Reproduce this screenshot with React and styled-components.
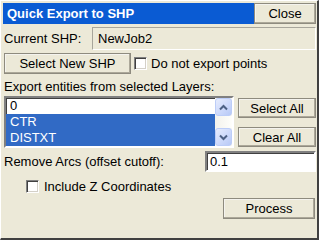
import React, { useState } from 'react';
import styled, { createGlobalStyle } from 'styled-components';

const GlobalStyle = createGlobalStyle`
  html, body {
    margin: 0;
    padding: 0;
    background: #ece9d8;
  }
  body {
    font-family: "Liberation Sans", Arial, sans-serif;
    font-size: 13px;
    color: #000;
  }
`;

const Window = styled.div`
  width: 319px;
  height: 240px;
  box-sizing: border-box;
  background: #ece9d8;
  border-style: solid;
  border-width: 1px 2px 2px 1px;
  border-color: #fff #404040 #404040 #fff;
  padding: 2px 1px 0 3px;
  display: flex;
  flex-direction: column;
  overflow: hidden;
`;

const TitleRow = styled.div`
  display: flex;
  height: 21px;
  margin-left: -1px;
`;

const TitleBar = styled.div`
  flex: 1;
  background: #0a5bd3;
  color: #fff;
  font-weight: bold;
  font-size: 13px;
  line-height: 21px;
  padding-left: 4px;
`;

const Button = styled.button`
  box-sizing: border-box;
  width: ${(p) => p.$w}px;
  height: ${(p) => p.$h || 21}px;
  margin: 0 ${(p) => p.$mr || 0}px 0 0;
  padding: 0;
  font-family: inherit;
  font-size: 13px;
  color: #000;
  background: #ece9d8;
  border: 1px solid;
  border-color: #fff #404040 #404040 #fff;
  box-shadow: inset -1px -1px 0 #aca899, inset 1px 1px 0 #f4f3ee;
  outline: 1px solid #8e8b7f;
  outline-offset: -1px;
  flex-shrink: 0;
`;

const Row = styled.div`
  display: flex;
  align-items: center;
  margin-top: ${(p) => p.$mt}px;
  height: ${(p) => p.$h}px;
  justify-content: ${(p) => p.$justify || 'flex-start'};
`;

const Label = styled.span`
  width: ${(p) => (p.$w ? `${p.$w}px` : 'auto')};
  flex-shrink: 0;
  white-space: nowrap;
`;

const ReadField = styled.div`
  flex: 1;
  height: 100%;
  box-sizing: border-box;
  border: 1px solid;
  border-color: #a7a59b #fff #fff #a7a59b;
  padding-left: 5px;
  line-height: 21px;
`;

const CheckLabel = styled.label`
  display: flex;
  align-items: center;
  gap: ${(p) => p.$gap}px;
  margin-left: ${(p) => p.$ml}px;
  white-space: nowrap;
`;

const Box = styled.span`
  width: 13px;
  height: 13px;
  box-sizing: border-box;
  background: #fff;
  border: 1px solid;
  border-color: #808080 #fff #fff #808080;
  box-shadow: inset 1px 1px 0 #404040, inset -1px -1px 0 #d4d0c8;
  flex-shrink: 0;
`;

const ListRow = styled.div`
  display: flex;
  margin-top: 2px;
  height: 52px;
  gap: 4px;
`;

const ListBox = styled.div`
  width: 231px;
  box-sizing: border-box;
  border: 2px solid;
  border-color: #808080 #fff #fff #808080;
  box-shadow: inset 1px 1px 0 #404040;
  background: #fff;
  display: flex;
`;

const Items = styled.div`
  flex: 1;
  display: flex;
  flex-direction: column;
`;

const Item = styled.div`
  height: 16px;
  line-height: 16px;
  padding-left: 4px;
  background: ${(p) => (p.$sel ? '#316ac5' : 'transparent')};
  color: ${(p) => (p.$sel ? '#fff' : '#000')};
`;

const ScrollBar = styled.div`
  width: 17px;
  display: flex;
  flex-direction: column;
  background: #f7f6f1;
`;

const Track = styled.div`
  flex: 1;
  background: linear-gradient(90deg, #f3f2ec, #fefefb);
`;

const ScrollBtn = styled.div`
  height: 18px;
  box-sizing: border-box;
  border: 1px solid #bccdf8;
  border-radius: 3px;
  background: linear-gradient(135deg, #e6ecfd 0%, #cdd9fb 55%, #b7c9f6 100%);
  display: flex;
  align-items: center;
  justify-content: center;
`;

const SideButtons = styled.div`
  display: flex;
  flex-direction: column;
  padding-top: 2px;
  gap: 9px;
`;

const Input = styled.div`
  width: 111px;
  height: 100%;
  margin-left: auto;
  box-sizing: border-box;
  background: #fff;
  border: 2px solid;
  border-color: #808080 #fff #fff #808080;
  box-shadow: inset 1px 1px 0 #404040;
  padding-left: 3px;
  line-height: 17px;
`;

const Chevron = ({ up }) => (
  <svg width="9" height="7" viewBox="0 0 9 7">
    <path
      d={up ? 'M1 5.5 L4.5 2 L8 5.5' : 'M1 1.5 L4.5 5 L8 1.5'}
      fill="none"
      stroke="#4d6185"
      strokeWidth="2"
    />
  </svg>
);

export default function App() {
  const [layers] = useState([
    { name: '0', sel: false },
    { name: 'CTR', sel: true },
    { name: 'DISTXT', sel: true },
  ]);

  return (
    <>
      <GlobalStyle />
      <Window>
        <TitleRow>
          <TitleBar>Quick Export to SHP</TitleBar>
          <Button $w={62}>Close</Button>
        </TitleRow>

        <Row $mt={3} $h={23}>
          <Label $w={88}>Current SHP:</Label>
          <ReadField>NewJob2</ReadField>
        </Row>

        <Row $mt={3} $h={21}>
          <Button $w={127}>Select New SHP</Button>
          <CheckLabel $ml={3} $gap={4}>
            <Box />
            Do not export points
          </CheckLabel>
        </Row>

        <Row $mt={4} $h={16}>
          <Label>Export entities from selected Layers:</Label>
        </Row>

        <ListRow>
          <ListBox>
            <Items>
              {layers.map((l) => (
                <Item key={l.name} $sel={l.sel}>
                  {l.name}
                </Item>
              ))}
            </Items>
            <ScrollBar>
              <ScrollBtn>
                <Chevron up />
              </ScrollBtn>
              <Track />
              <ScrollBtn>
                <Chevron />
              </ScrollBtn>
            </ScrollBar>
          </ListBox>
          <SideButtons>
            <Button $w={78} $h={20}>Select All</Button>
            <Button $w={78} $h={20}>Clear All</Button>
          </SideButtons>
        </ListRow>

        <Row $mt={3} $h={21}>
          <Label>Remove Arcs (offset cutoff):</Label>
          <Input>0.1</Input>
        </Row>

        <Row $mt={6} $h={17}>
          <CheckLabel $ml={22} $gap={5}>
            <Box />
            Include Z Coordinates
          </CheckLabel>
        </Row>

        <Row $mt={3} $h={21} $justify="flex-end">
          <Button $w={92} $mr={1}>Process</Button>
        </Row>
      </Window>
    </>
  );
}
